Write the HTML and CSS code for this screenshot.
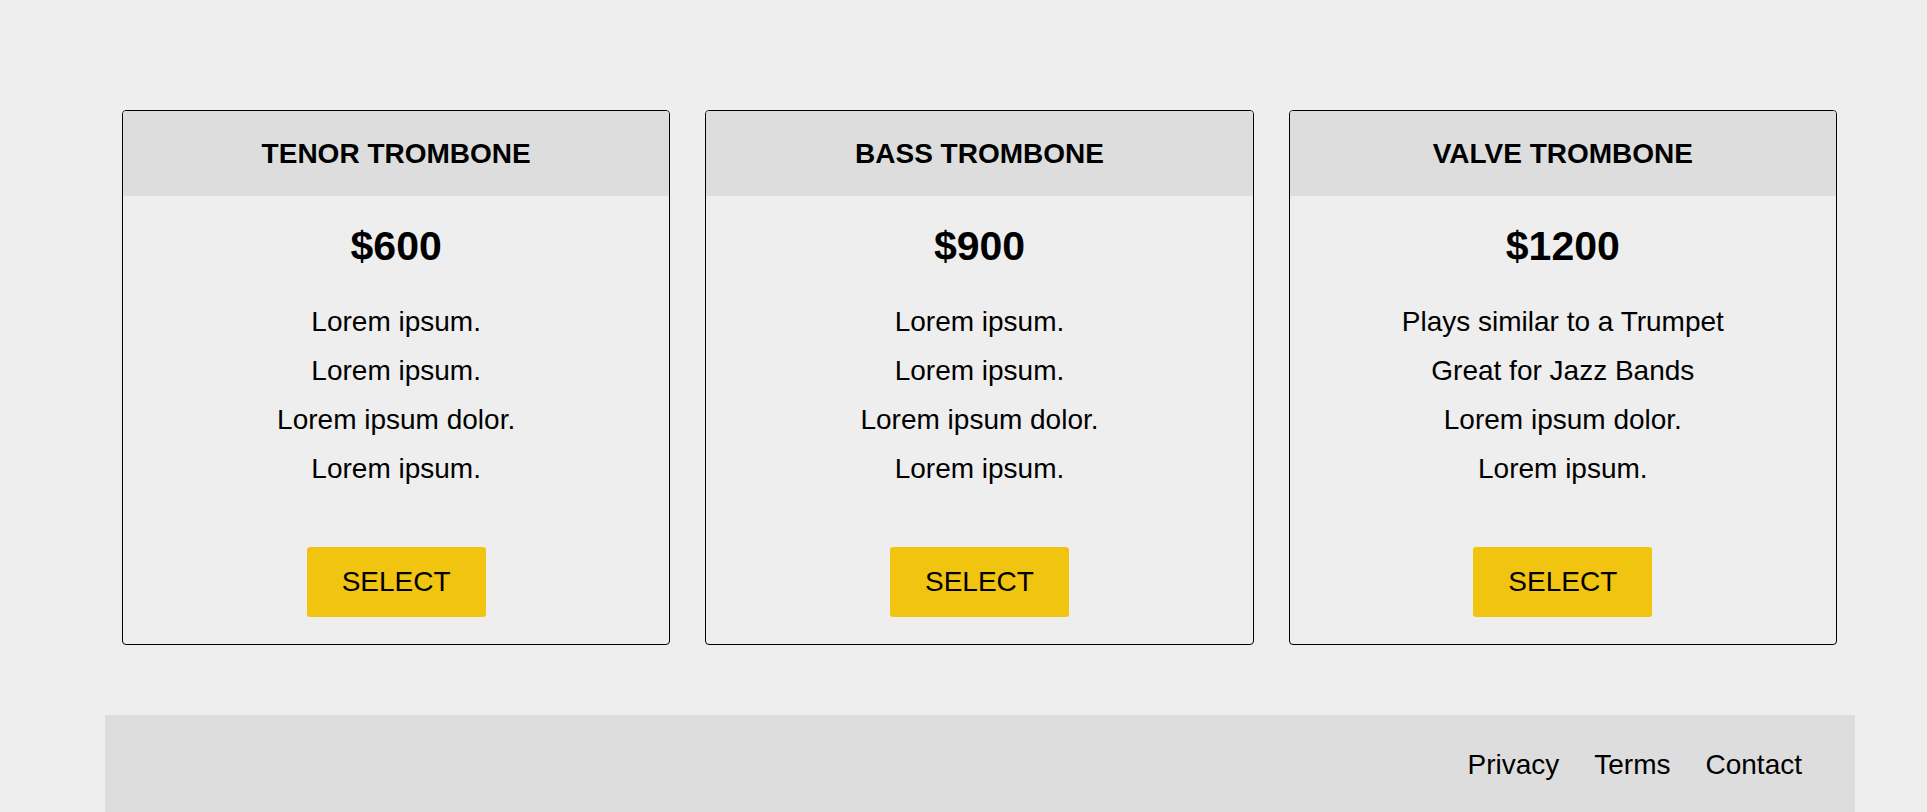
FILE: index.html
```html
<!DOCTYPE html>
<html lang="en">
<head>
<meta charset="utf-8">
<title>Trombones</title>
<link rel="stylesheet" href="styles.css">
</head>
<body>
<div class="page">
  <main class="plans">
    <section class="card">
      <header class="card-head"><h2 class="card-title">TENOR TROMBONE</h2></header>
      <div class="card-body">
        <p class="price">$600</p>
        <ul class="features">
          <li>Lorem ipsum.</li>
          <li>Lorem ipsum.</li>
          <li>Lorem ipsum dolor.</li>
          <li>Lorem ipsum.</li>
        </ul>
        <button class="select">SELECT</button>
      </div>
    </section>
    <section class="card">
      <header class="card-head"><h2 class="card-title">BASS TROMBONE</h2></header>
      <div class="card-body">
        <p class="price">$900</p>
        <ul class="features">
          <li>Lorem ipsum.</li>
          <li>Lorem ipsum.</li>
          <li>Lorem ipsum dolor.</li>
          <li>Lorem ipsum.</li>
        </ul>
        <button class="select">SELECT</button>
      </div>
    </section>
    <section class="card">
      <header class="card-head"><h2 class="card-title">VALVE TROMBONE</h2></header>
      <div class="card-body">
        <p class="price">$1200</p>
        <ul class="features">
          <li>Plays similar to a Trumpet</li>
          <li>Great for Jazz Bands</li>
          <li>Lorem ipsum dolor.</li>
          <li>Lorem ipsum.</li>
        </ul>
        <button class="select">SELECT</button>
      </div>
    </section>
  </main>
  <footer class="footer">
    <nav class="footer-links">
      <a href="#">Privacy</a>
      <a href="#">Terms</a>
      <a href="#">Contact</a>
    </nav>
  </footer>
</div>
</body>
</html>
```
FILE: styles.css
```css
html, body {
  margin: 0;
  padding: 0;
  background: #eeeeee;
  color: #000;
  font-family: "Liberation Sans", Arial, sans-serif;
}

.page {
  width: 1750px;
  margin-left: 104.5px;
}

.plans {
  display: flex;
  gap: 35px;
  padding: 110px 17.5px 70.5px;
}

.card {
  flex: 1 1 0;
  border: 1px solid #000;
  border-radius: 4px;
  overflow: hidden;
  background: #eeeeee;
  text-align: center;
}

.card-head {
  background: #dddddd;
  padding: 26px 0;
}

.card-title {
  margin: 0;
  font-size: 28px;
  line-height: 33px;
  font-weight: bold;
}

.card-body {
  padding: 26.5px 0 26.5px;
}

.price {
  margin: 0 0 28px;
  font-size: 41px;
  font-weight: bold;
  line-height: 46px;
}

.features {
  list-style: none;
  margin: 0 0 53.75px;
  padding: 0;
  font-size: 28px;
  line-height: 49.2px;
}

.select {
  font-family: inherit;
  font-size: 28px;
  line-height: 32px;
  color: #000;
  background: #f1c40f;
  border: none;
  border-radius: 3px;
  padding: 19px 35px;
  cursor: pointer;
}

.footer {
  background: #dddddd;
  padding: 34px 52.5px 40px;
}

.footer-links {
  display: flex;
  justify-content: flex-end;
  gap: 35px;
  font-size: 28px;
  line-height: 32.2px;
}

.footer-links a {
  color: #000;
  text-decoration: none;
}
```
